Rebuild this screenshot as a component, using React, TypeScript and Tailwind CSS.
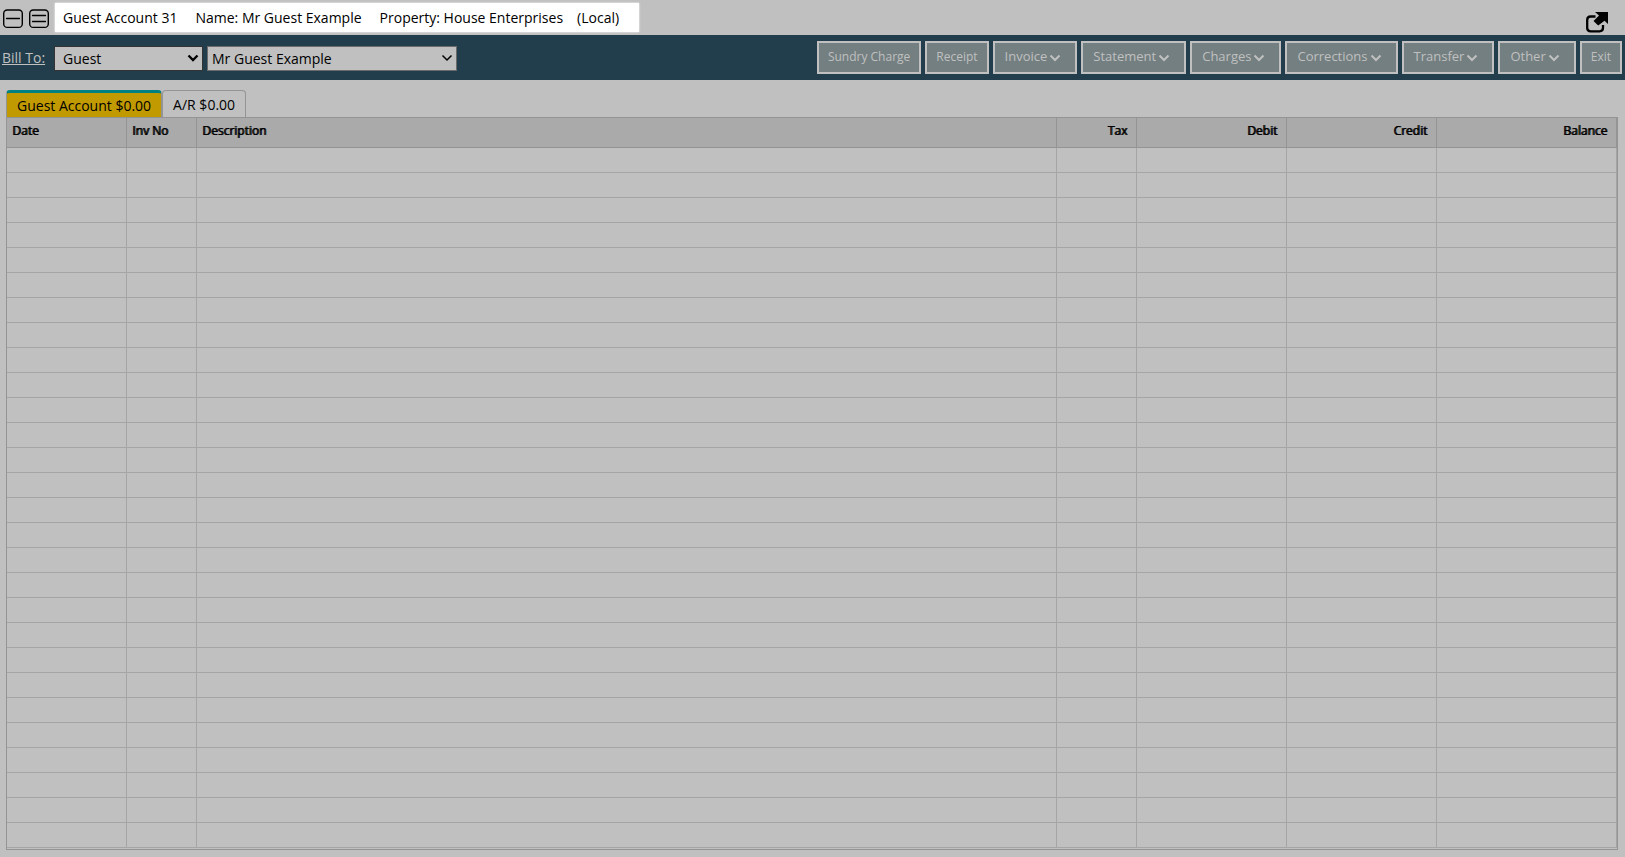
import { useState } from 'react';

const MENU = [
    { label: 'Sundry Charge', drop: false },
    { label: 'Receipt', drop: false },
    { label: 'Invoice', drop: true },
    { label: 'Statement', drop: true },
    { label: 'Charges', drop: true },
    { label: 'Corrections', drop: true },
    { label: 'Transfer', drop: true },
    { label: 'Other', drop: true },
    { label: 'Exit', drop: false },
];

const COLUMNS = [
    { label: 'Date', width: 'w-[120px]', align: 'text-left' },
    { label: 'Inv No', width: 'w-[70px]', align: 'text-left' },
    { label: 'Description', width: '', align: 'text-left' },
    { label: 'Tax', width: 'w-[80px]', align: 'text-right' },
    { label: 'Debit', width: 'w-[150px]', align: 'text-right' },
    { label: 'Credit', width: 'w-[150px]', align: 'text-right' },
    { label: 'Balance', width: 'w-[180px]', align: 'text-right' },
];

const ROWS = Array.from({ length: 28 }, (_, i) => i);

const Chevron = ({ className, strokeWidth }: { className: string; strokeWidth: number }) => (
    <svg className={className} viewBox="0 0 12 8" fill="none" stroke="currentColor" strokeWidth={strokeWidth}>
        <path d="M1.5 1.5 6 6l4.5-4.5" />
    </svg>
);

const DensityIcon = ({ lines }: { lines: number[] }) => (
    <svg className="h-5 w-5" viewBox="0 0 20 20" fill="none" stroke="currentColor" strokeLinecap="round">
        <rect x="0.7" y="1" width="18.6" height="17.4" rx="3.5" strokeWidth="1.4" />
        {lines.map(y => <path key={y} d={`M3.5 ${y}h13`} strokeWidth="1.3" />)}
    </svg>
);

export default function App() {
    const [tab, setTab] = useState('guest');

    return (
        <div className="min-h-screen bg-[#c0c0c0] font-['Open_Sans',sans-serif] text-sm text-black">
            {/* Title */}
            <header className="flex h-[35px] items-center pl-[3px] pr-[17px]">
                <button type="button" aria-label="Single line" className="mr-1.5 pt-[3px]"><DensityIcon lines={[9.5]} /></button>
                <button type="button" aria-label="Double line" className="mr-1.5 pt-[3px]"><DensityIcon lines={[6.5, 12.5]} /></button>
                <h1 className="flex h-[29px] items-center whitespace-nowrap bg-white pl-2 pr-5 shadow-[0_0_2px_#ffffff]">
                    <span className="mr-[18px]">Guest Account 31</span>
                    <span className="mr-[18px]">Name: Mr Guest Example</span>
                    <span className="mr-3.5">Property: House Enterprises</span>
                    <span>(Local)</span>
                </h1>
                <a href="#open" aria-label="Open in new window" className="ml-auto pt-2">
                    <svg className="h-[22px] w-[22px]" viewBox="0 0 22 22">
                        <path d="M9.5 5.5H4.7Q1.2 5.5 1.2 9v8Q1.2 20.3 4.7 20.3h8.8q3.5 0 3.5-3.500V14" fill="none" stroke="currentColor" strokeWidth="2.3" />
                        <path d="M9 1h13v12l-3.5-3.2-6.3 4.7-4.7-4.5 5.500-5.500z" fill="currentColor" />
                    </svg>
                </a>
            </header>

            {/* Toolbar */}
            <div className="flex h-[45px] items-center bg-[#223e4c] pl-0.5 pr-[3px]">
                <label htmlFor="billTo" className="w-[52px] text-[#c0c0c0] underline">Bill To:</label>
                <div className="flex gap-1 pt-0.5">
                    <div className="relative">
                        <select id="billTo" className="h-[25px] w-[149px] appearance-none border border-[#333333] bg-[#c0c0c0] pl-2">
                            <option>Guest</option>
                        </select>
                        <Chevron className="pointer-events-none absolute right-1 top-2 h-2 w-3" strokeWidth={2.4} />
                    </div>
                    <div className="relative">
                        <select aria-label="Guest name" className="h-[25px] w-[250px] appearance-none border border-[#6b6b6b] bg-[#c0c0c0] pl-1">
                            <option>Mr Guest Example</option>
                        </select>
                        <Chevron className="pointer-events-none absolute right-1 top-2 h-2 w-3" strokeWidth={1.5} />
                    </div>
                </div>
                <nav className="ml-auto flex gap-1 leading-5 text-[#c0c0c0]">
                    {MENU.map(item => (
                        <button
                            key={item.label}
                            type="button"
                            className={`flex h-[33px] items-center whitespace-nowrap border-2 border-[#c0c0c0] bg-[#737f80] ${item.drop ? 'pb-1 pl-2.5 pr-3.5 text-[13px]' : 'px-[9px] pb-0.5 text-[12px]'}`}
                        >
                            {item.label}
                            {item.drop && <Chevron className="ml-0.5 mt-1 h-2 w-3" strokeWidth={2} />}
                        </button>
                    ))}
                </nav>
            </div>

            <main className="pb-[7px] pl-1.5 pr-[7px] pt-2.5">
                {/* Tabs */}
                <div role="tablist" className="flex h-[27px]">
                    <button
                        type="button"
                        role="tab"
                        aria-selected={tab === 'guest'}
                        onClick={() => setTab('guest')}
                        className="rounded-t border-x border-t-3 border-x-[#949494] border-t-[#008080] bg-[#c09a00] px-2.5 pt-0.5"
                    >
                        Guest Account $0.00
                    </button>
                    <button
                        type="button"
                        role="tab"
                        aria-selected={tab === 'ar'}
                        onClick={() => setTab('ar')}
                        className="rounded-t border-x border-t border-[#949494] px-2.5 pt-0.5"
                    >
                        A/R $0.00
                    </button>
                </div>

                {/* Ledger */}
                <div className="border border-[#949494] pb-px">
                    <table className="w-full table-fixed border-separate border-spacing-0">
                        <thead>
                            <tr className="h-[30px] bg-[#aaaaaa] text-[12px] leading-4">
                                {COLUMNS.map(c => (
                                    <th key={c.label} className={`border-b border-r border-[#949494] pb-1 pl-[5px] pr-[9px] font-normal [text-shadow:1px_0_0_#000000] ${c.width} ${c.align}`}>
                                        {c.label}
                                    </th>
                                ))}
                            </tr>
                        </thead>
                        <tbody>
                            {ROWS.map(r => (
                                <tr key={r} className="h-[25px]">
                                    {COLUMNS.map(c => <td key={c.label} className="border-b border-r border-[#a5a5a5] p-0" />)}
                                </tr>
                            ))}
                        </tbody>
                    </table>
                </div>
            </main>
        </div>
    );
}
